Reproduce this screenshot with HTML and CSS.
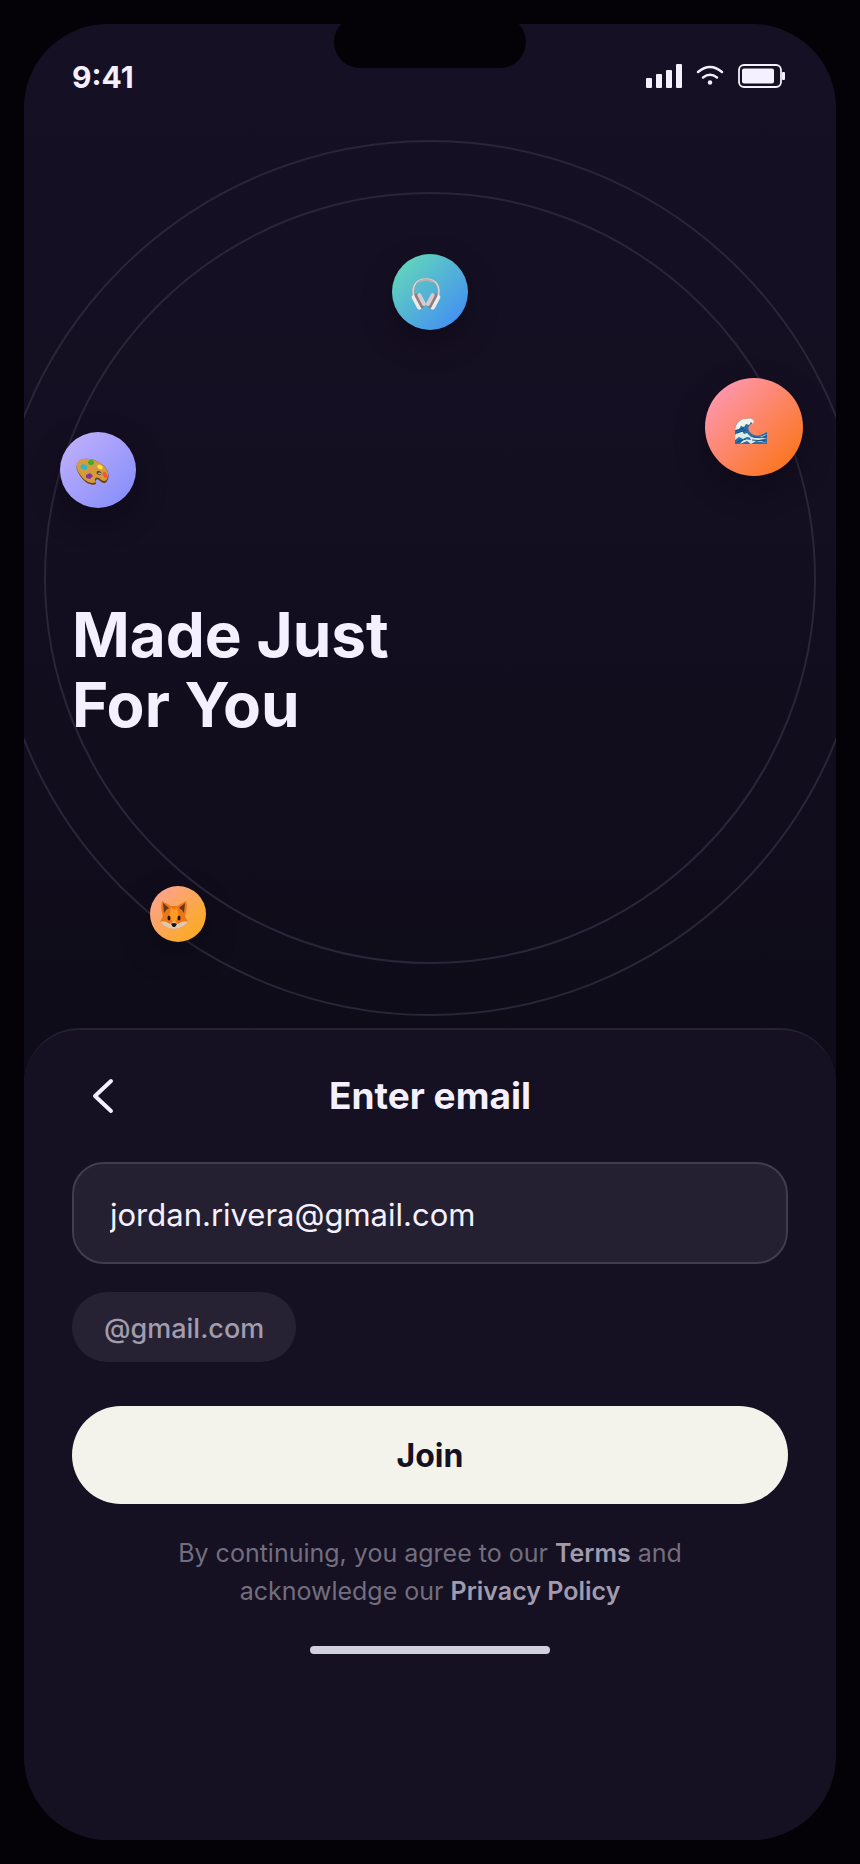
FILE: index.html
```html
<!DOCTYPE html>
<html lang="en">
<head>
<meta charset="utf-8">
<meta name="viewport" content="width=device-width, initial-scale=1">
<title>Enter email</title>
<link rel="stylesheet" href="styles.css">
</head>
<body>
<main class="phone">
  <div class="notch"></div>
  <section class="hero">
    <div class="orbits" aria-hidden="true">
      <div class="ring ring-outer"></div>
      <div class="ring ring-inner"></div>
      <div class="ball ball-music">
        <svg class="glyph-music" width="30" height="34" viewBox="0 0 30 34" fill="none">
          <path d="M3 20C1 13 2 2.500 15 2.500S29 13 27 20" stroke="#8fa3a8" stroke-width="3"/>
          <path d="M3 20C1 13 2 2 15 2S29 13 27 20" stroke="#d3d8d6" stroke-width="1.500"/>
          <path d="M8 4.500C12 2.500 18 2.500 22 4.500" stroke="#b9b3ad" stroke-width="2"/>
          <g transform="rotate(-28 8 24)"><rect x="3" y="16" width="5" height="16" rx="2.500" fill="#eeeae8"/><rect x="6.500" y="16" width="3.500" height="16" rx="1.500" fill="#8d7d83"/><rect x="9" y="17" width="4" height="14" rx="2" fill="#d4cccb"/></g>
          <g transform="rotate(28 22 24)"><rect x="22" y="16" width="5" height="16" rx="2.500" fill="#eeeae8"/><rect x="20" y="16" width="3.500" height="16" rx="1.500" fill="#8d7d83"/><rect x="17" y="17" width="4" height="14" rx="2" fill="#d4cccb"/></g>
        </svg>
      </div>
      <div class="ball ball-wave">
        <svg class="glyph-wave" width="34" height="28" viewBox="0 0 34 28">
          <path d="M1 27V12C2 5 8 1 13 2C16 0 19 2 20 4C20 7 17 6 16 8C13 10 14 16 20 18C25 20 29 17 33 15V27Z" fill="#286da6"/>
          <path d="M1 13C2 5 8 1 13 2C16 0 19 2 20 4L19 7L17 5L15 8L12 7L10 10L7 9L5 12Z" fill="#edf3e9"/>
          <path d="M2 17L8 14L10 17L13 16L18 21L13 20L9 22L5 20L1 23V18ZM15 19Q22 23 33 17L28 21L33 21L25 23L33 26L22 24L17 27L13 24L6 27L10 22L17 23Z" fill="#d9ece9"/>
          <path d="M2 14L10 11M3 16L12 13M19 20Q26 22 33 19M18 23L31 24M3 25L12 22" fill="none" stroke="#154c84"/>
        </svg>
      </div>
      <div class="ball ball-art">
        <svg class="glyph-art" width="34" height="28" viewBox="0 0 34 28">
          <path d="M2 5C5-1 16 0 24 5C31 9 35 17 31 23C29 27 25 24 23 22C20 20 19 23 20 26C13 29 5 21 2 14C0 10 0 8 2 5Z" fill="#624016"/>
          <path d="M2 4C5-1 16 0 24 5C31 9 34 16 31 21C29 25 25 22 23 20C19 18 18 22 20 24C14 28 5 20 2 13C0 9 0 7 2 4Z" fill="#d59b3b"/>
          <ellipse cx="15" cy="4.500" rx="3" ry="2.500" fill="#35ad35"/>
          <ellipse cx="8" cy="9" rx="3.500" ry="2.500" transform="rotate(25 8 9)" fill="#2ab6cf"/>
          <ellipse cx="24" cy="9" rx="3" ry="2" transform="rotate(30 24 9)" fill="#ffe044"/>
          <ellipse cx="29" cy="17" rx="2" ry="3" transform="rotate(-25 29 17)" fill="#f0543c"/>
          <path d="M10 17L14 15L17 18L14 21L10 20Z" fill="#8733a2"/>
          <ellipse cx="23" cy="15" rx="2.500" ry="2" transform="rotate(25 23 15)" fill="#56401f"/>
          <ellipse cx="23.500" cy="15.500" rx="1.500" ry="1" fill="#a7a0f5"/>
        </svg>
      </div>
      <div class="ball ball-fox">
        <svg class="glyph-fox" width="30" height="30" viewBox="0 0 30 30">
          <path d="M3 1L12 6H18L27 1Q29 7 26 16L29 22Q23 29 15 29Q7 29 1 22L4 16Q1 7 3 1Z" fill="#ed7617"/>
          <path d="M4 3L10 8Q6 10 5 13ZM26 3L20 8Q24 10 25 13Z" fill="#613821"/>
          <path d="M12 7Q15 12 18 7L20 17L16 22H14L10 17Z" fill="#ff9b24"/>
          <path d="M1 22Q6 20 11 24L14 22Q15 21 16 22L19 24Q24 20 29 22Q23 29 15 29Q7 29 1 22Z" fill="#e3c7ae"/>
          <ellipse cx="10" cy="18" rx="1.500" ry="2.500" fill="#281414"/><ellipse cx="20" cy="18" rx="1.500" ry="2.500" fill="#281414"/>
          <path d="M12 24Q15 22 18 24L16 27H14Z" fill="#191416"/>
        </svg>
      </div>
    </div>
    <header class="status">
      <span class="time">9:41</span>
      <div class="status-icons">
        <svg width="36" height="24" viewBox="0 0 36 24" fill="currentColor" role="img" aria-label="Signal"><rect y="14" width="6" height="10" rx="1"/><rect x="10" y="10" width="6" height="14" rx="1"/><rect x="20" y="6" width="6" height="18" rx="1"/><rect x="30" width="6" height="24" rx="1"/></svg>
        <svg width="28" height="24" viewBox="0 0 28 24" fill="none" stroke="currentColor" stroke-width="2.400" stroke-linecap="round" role="img" aria-label="Wi-Fi"><path d="M2 8Q14-2 26 8M7 13.500Q14 8 21 13.500"/><circle cx="14" cy="18.500" r="2.200" fill="currentColor" stroke="none"/></svg>
        <svg width="48" height="24" viewBox="0 0 48 24" role="img" aria-label="Battery"><rect x="1" y="1" width="42" height="22" rx="5" fill="none" stroke="currentColor" stroke-width="1.800"/><rect x="4" y="4.500" width="32" height="15" rx="2" fill="currentColor"/><rect x="44" y="8" width="3" height="8" rx="1" fill="currentColor"/></svg>
      </div>
    </header>
    <h1 class="headline">Made Just<br>For You</h1>
  </section>
  <section class="sheet">
    <div class="sheet-head">
      <button class="back" type="button" aria-label="Back">
        <svg width="26" height="38" viewBox="0 0 26 38" fill="none" stroke="currentColor" stroke-width="4" stroke-linecap="round" stroke-linejoin="round"><path d="M20 4L4 19L20 34"/></svg>
      </button>
      <h2 class="title" id="email-title">Enter email</h2>
    </div>
    <form class="form">
      <input class="email" type="email" aria-labelledby="email-title" value="jordan.rivera@gmail.com">
      <button class="chip" type="button">@gmail.com</button>
      <button class="join" type="button">Join</button>
    </form>
    <p class="legal">By continuing, you agree to our <a href="#terms">Terms</a> and<br>acknowledge our <a href="#privacy">Privacy Policy</a></p>
    <div class="home-bar"></div>
  </section>
</main>
</body>
</html>
```
FILE: styles.css
```css
* {
  box-sizing: border-box;
}

body {
  margin: 0;
  padding: 24px;
  background: #040207;
  color: #f4f0ff;
  font-family: Inter, "Liberation Sans", sans-serif;
}

h1, h2, p {
  margin: 0;
}

button, input {
  font: inherit;
  color: inherit;
  border: 0;
}

button {
  cursor: pointer;
}

.phone {
  position: relative;
  display: flex;
  flex-direction: column;
  min-height: calc(100vh - 48px);
  overflow: hidden;
  border-radius: 84px;
  background: linear-gradient(#161025, #130e20 500px, #0f0c19 1004px);
}

.notch {
  position: absolute;
  z-index: 2;
  top: -8px;
  left: 50%;
  width: 192px;
  height: 52px;
  margin-left: -96px;
  border-radius: 26px;
  background: #040207;
}

.hero {
  position: relative;
  padding: 0 48px 288px;
}

.status {
  position: relative;
  display: flex;
  align-items: center;
  justify-content: space-between;
  height: 104px;
}

.time {
  padding-top: 2px;
  font-size: 30px;
  font-weight: 700;
}

.status-icons {
  display: flex;
  align-items: center;
  gap: 14px;
  padding-right: 2px;
}

.headline {
  position: relative;
  margin-top: 472px;
  font-size: 62px;
  font-weight: 700;
  line-height: 70px;
}

/* The orbit canvas is centred on the rings' common centre. */
.orbits {
  position: absolute;
  top: 116px;
  left: 50%;
  width: 876px;
  height: 876px;
  margin-left: -438px;
}

.ring {
  position: absolute;
  border: 2px solid #2a2538;
  border-radius: 50%;
}

.ring-outer {
  inset: 0;
}

.ring-inner {
  inset: 52px;
}

.ball {
  position: absolute;
  display: grid;
  place-items: center;
  width: 76px;
  height: 76px;
  border-radius: 50%;
  box-shadow: 0 12px 32px rgba(0, 0, 0, 0.25);
}

.ball-music {
  top: 114px;
  left: 400px;
  padding: 4px 8px 0 0;
  background: linear-gradient(135deg, #66dfb3, #3f86fa);
}

.ball-wave {
  top: 238px;
  left: 713px;
  width: 98px;
  height: 98px;
  padding: 8px 6px 0 0;
  background: linear-gradient(135deg, #ff9bc3, #fb7624 85%);
}

.ball-art {
  top: 292px;
  left: 68px;
  padding: 4px 10px 0 0;
  background: linear-gradient(135deg, #c4b2fc, #818bfa);
}

.ball-fox {
  top: 746px;
  left: 158px;
  width: 56px;
  height: 56px;
  padding: 2px 8px 0 0;
  background: linear-gradient(135deg, #fda29f, #fbaa22 85%);
}

.sheet {
  position: relative;
  display: flex;
  flex: 1;
  flex-direction: column;
  padding: 34px 48px 48px;
  border-top: 2px solid #252131;
  border-radius: 56px 56px 0 0;
  background: #151122;
}

.sheet-head {
  display: grid;
  grid-template-columns: 64px 1fr 64px;
  align-items: center;
  height: 64px;
}

.back {
  display: grid;
  place-items: center;
  width: 64px;
  height: 64px;
  padding: 0;
  background: none;
}

.title {
  font-size: 37px;
  font-weight: 700;
  line-height: 48px;
  text-align: center;
}

.form {
  display: flex;
  flex-direction: column;
  align-items: flex-start;
  margin-top: 34px;
}

.email {
  width: 100%;
  height: 102px;
  padding: 2px 36px 0;
  border: 2px solid #413d4d;
  border-radius: 32px;
  background: #242031;
  font-size: 31px;
  outline: 0;
}

.chip {
  height: 70px;
  margin-top: 28px;
  padding: 2px 32px 0;
  border-radius: 35px;
  background: #262233;
  color: #a19cae;
  font-size: 27px;
  font-weight: 500;
}

.join {
  width: 100%;
  height: 98px;
  margin-top: 44px;
  border-radius: 49px;
  background: #f4f3eb;
  color: #151122;
  font-size: 32px;
  font-weight: 700;
}

.legal {
  margin-top: 30px;
  color: #736e7f;
  font-size: 25px;
  line-height: 38px;
  text-align: center;
}

.legal a {
  color: #a09bad;
  font-weight: 600;
  text-decoration: none;
}

.home-bar {
  align-self: center;
  width: 240px;
  height: 8px;
  margin-top: 36px;
  border-radius: 4px;
  background: #d2cfdf;
}
```
